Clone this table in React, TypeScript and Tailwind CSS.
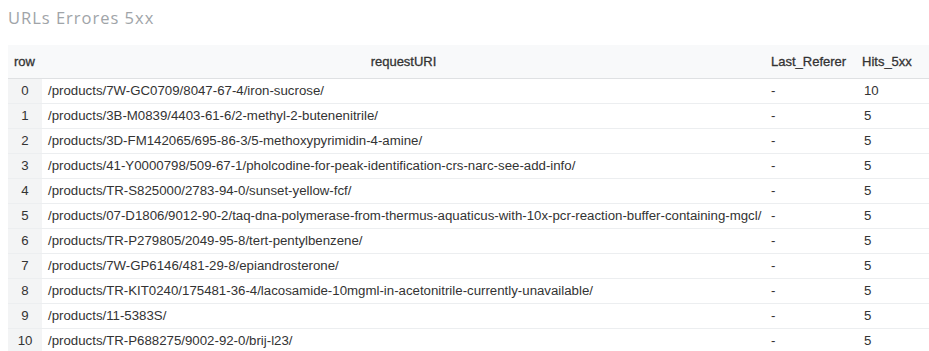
import React from "react";

const rows: [string, number][] = [
  ["/products/7W-GC0709/8047-67-4/iron-sucrose/", 10],
  ["/products/3B-M0839/4403-61-6/2-methyl-2-butenenitrile/", 5],
  ["/products/3D-FM142065/695-86-3/5-methoxypyrimidin-4-amine/", 5],
  ["/products/41-Y0000798/509-67-1/pholcodine-for-peak-identification-crs-narc-see-add-info/", 5],
  ["/products/TR-S825000/2783-94-0/sunset-yellow-fcf/", 5],
  ["/products/07-D1806/9012-90-2/taq-dna-polymerase-from-thermus-aquaticus-with-10x-pcr-reaction-buffer-containing-mgcl/", 5],
  ["/products/TR-P279805/2049-95-8/tert-pentylbenzene/", 5],
  ["/products/7W-GP6146/481-29-8/epiandrosterone/", 5],
  ["/products/TR-KIT0240/175481-36-4/lacosamide-10mgml-in-acetonitrile-currently-unavailable/", 5],
  ["/products/11-5383S/", 5],
  ["/products/TR-P688275/9002-92-0/brij-l23/", 5],
];

export default function App() {
  return (
    <div className="w-[929px] h-[351px] overflow-hidden bg-white">
      <h1 className="pl-[8px] pt-[6px] h-[45px] text-[16.5px] tracking-[0.06em] text-[#a0a4a8] font-['Open_Sans',sans-serif]">
        URLs Errores 5xx
      </h1>
      <table className="ml-[8px] w-[921px] table-fixed border-collapse font-['Liberation_Sans',Arial,sans-serif] text-[13px] text-[#333]">
        <colgroup>
          <col className="w-[34px]" />
          <col className="w-[723px]" />
          <col className="w-[92px]" />
          <col className="w-[72px]" />
        </colgroup>
        <thead>
          <tr className="h-[33px] bg-[#f8f9fa] border-b border-[#dfe1e3] text-[#333]">
            <th className="text-left pl-[6px] font-normal [-webkit-text-stroke:0.3px]">row</th>
            <th className="text-center font-normal [-webkit-text-stroke:0.3px]">requestURI</th>
            <th className="text-left pl-[6px] font-normal [-webkit-text-stroke:0.3px]">Last_Referer</th>
            <th className="text-left pl-[5px] font-normal [-webkit-text-stroke:0.3px]">Hits_5xx</th>
          </tr>
        </thead>
        <tbody className="text-[13.25px]">
          {rows.map(([uri, hits], i) => (
            <tr key={i} className="h-[25px] border-b border-[#eceef0]">
              <td className="bg-[#f3f4f5] text-center">{i}</td>
              <td className="pl-[6px] whitespace-nowrap overflow-hidden">{uri}</td>
              <td className="pl-[6px]">-</td>
              <td className="pl-[7px]">{hits}</td>
            </tr>
          ))}
        </tbody>
      </table>
    </div>
  );
}
